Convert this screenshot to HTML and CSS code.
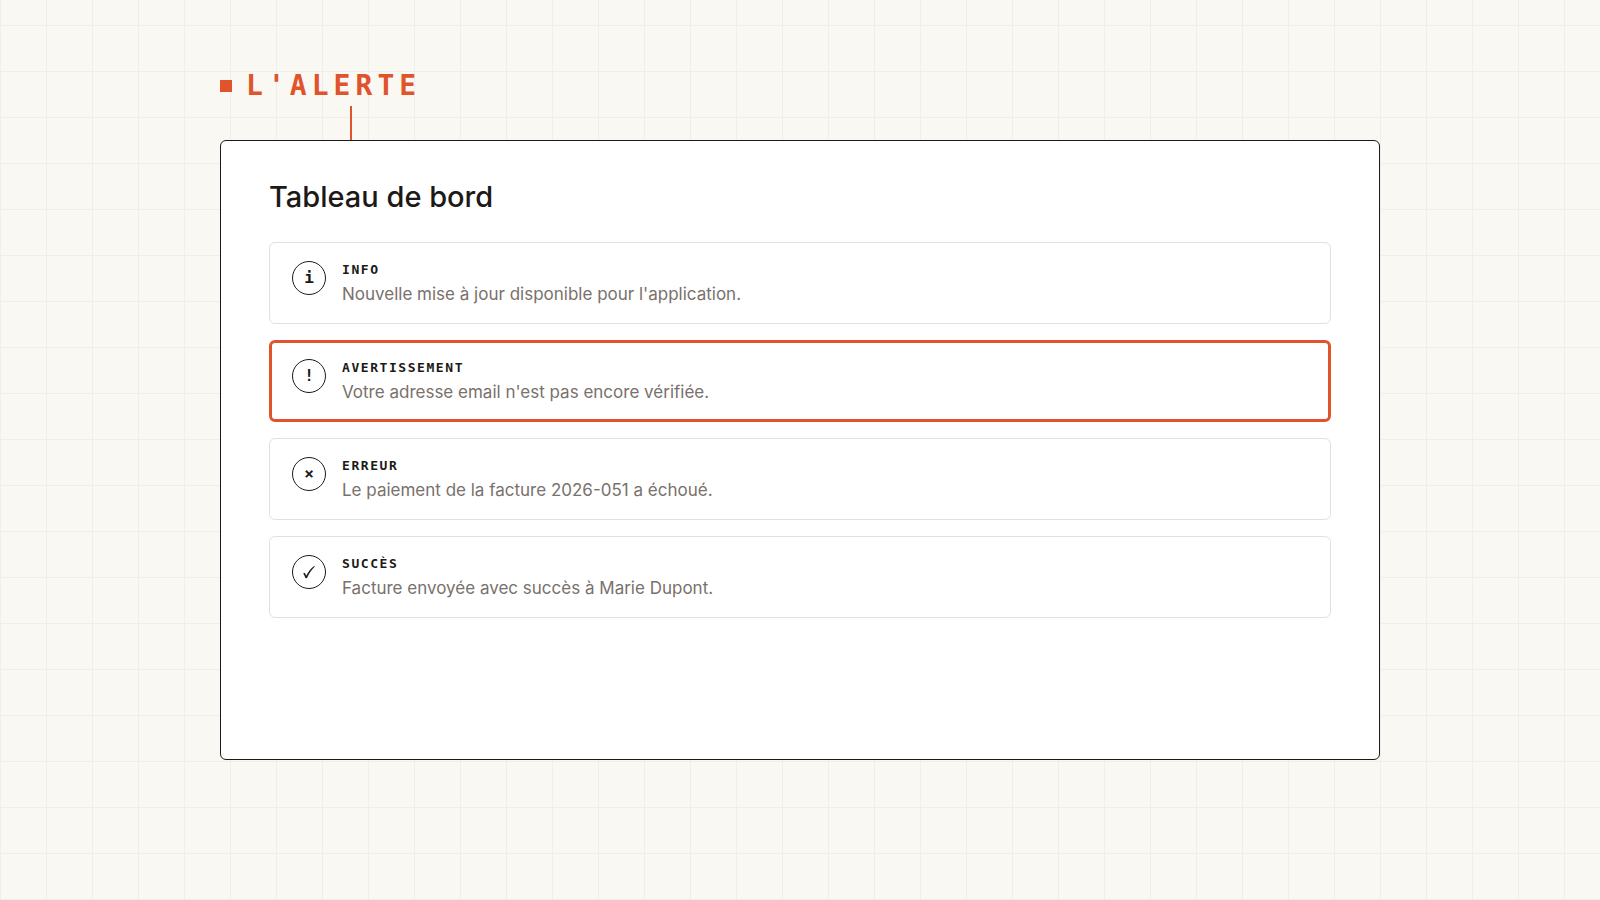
FILE: index.html
```html
<!DOCTYPE html>
<html lang="fr">
<head>
<meta charset="utf-8">
<meta name="viewport" content="width=device-width, initial-scale=1">
<title>L'alerte</title>
<link rel="stylesheet" href="styles.css">
</head>
<body>
<main class="stage">
  <h1 class="topic"><span class="topic-mark"></span>L'ALERTE</h1>
  <div class="connector"></div>
  <section class="card">
    <h2 class="card-title">Tableau de bord</h2>
    <div class="alerts">
      <article class="alert">
        <span class="alert-icon">i</span>
        <div class="alert-body">
          <h3 class="alert-label">INFO</h3>
          <p class="alert-text">Nouvelle mise à jour disponible pour l'application.</p>
        </div>
      </article>
      <article class="alert alert-active">
        <span class="alert-icon">!</span>
        <div class="alert-body">
          <h3 class="alert-label">AVERTISSEMENT</h3>
          <p class="alert-text">Votre adresse email n'est pas encore vérifiée.</p>
        </div>
      </article>
      <article class="alert">
        <span class="alert-icon">×</span>
        <div class="alert-body">
          <h3 class="alert-label">ERREUR</h3>
          <p class="alert-text">Le paiement de la facture 2026-051 a échoué.</p>
        </div>
      </article>
      <article class="alert">
        <span class="alert-icon">
          <svg class="check" viewBox="0 0 16 16" aria-hidden="true"><path d="M2.2 9.6 L3.7 8.7 C4.4 9.6 4.8 10.6 5.2 11.7 C7.2 7.8 9.8 4.6 13.2 2 L13.9 2.4 C10.6 5.6 8 9.5 6 14 L4.5 14.3 C3.9 12.5 3.2 10.9 2.2 9.6 Z"/></svg>
        </span>
        <div class="alert-body">
          <h3 class="alert-label">SUCCÈS</h3>
          <p class="alert-text">Facture envoyée avec succès à Marie Dupont.</p>
        </div>
      </article>
    </div>
  </section>
</main>
</body>
</html>
```
FILE: styles.css
```css
:root {
  --paper: #faf8f3;
  --grid: #f0eee9;
  --ink: #1c1917;
  --muted: #78716c;
  --line: #e5e0d8;
  --accent: #e0532b;
  --mono: "DejaVu Sans Mono", monospace;
}

* { box-sizing: border-box; margin: 0; }

body {
  min-height: 100vh;
  display: flex;
  justify-content: center;
  padding: 70px 24px 140px;
  background-color: var(--paper);
  background-image:
    linear-gradient(to right, var(--grid) 1px, transparent 1px),
    linear-gradient(to bottom, var(--grid) 1px, transparent 1px);
  background-size: 46px 46px;
  background-position: 0 -21px;
  color: var(--ink);
  font-family: "Inter", sans-serif;
}

.stage {
  width: 100%;
  max-width: 1160px;
  display: flex;
  flex-direction: column;
}

.topic {
  display: flex;
  align-items: center;
  gap: 14px;
  height: 32px;
  font: 700 28px/34px var(--mono);
  letter-spacing: 0.18em;
  color: var(--accent);
}

.topic-mark {
  width: 12px;
  height: 12px;
  background: var(--accent);
}

.connector {
  width: 2px;
  height: 34px;
  margin: 4px 0 0 130px;
  background: var(--accent);
}

.card {
  flex: 1;
  padding: 36px 48px 48px;
  background: #fff;
  border: 1px solid var(--ink);
  border-radius: 6px;
}

.card-title {
  margin-bottom: 25px;
  font-size: 29px;
  line-height: 40px;
  font-weight: 500;
}

.alerts {
  display: flex;
  flex-direction: column;
  gap: 16px;
}

.alert {
  display: flex;
  align-items: flex-start;
  gap: 16px;
  padding: 18px 22px 17px;
  border: 1px solid var(--line);
  border-radius: 6px;
}

.alert-active {
  padding: 16px 20px 15px;
  border: 3px solid var(--accent);
}

.alert-icon {
  flex: none;
  display: grid;
  place-items: center;
  width: 34px;
  height: 34px;
  border: 1px solid var(--ink);
  border-radius: 50%;
  font: 700 16px/20px var(--mono);
}

.check {
  width: 16px;
  height: 16px;
  fill: currentColor;
}

.alert-label {
  font: 700 13px/18px var(--mono);
  letter-spacing: 0.12em;
}

.alert-text {
  margin-top: 3px;
  font-size: 17px;
  line-height: 24px;
  color: var(--muted);
}
```
